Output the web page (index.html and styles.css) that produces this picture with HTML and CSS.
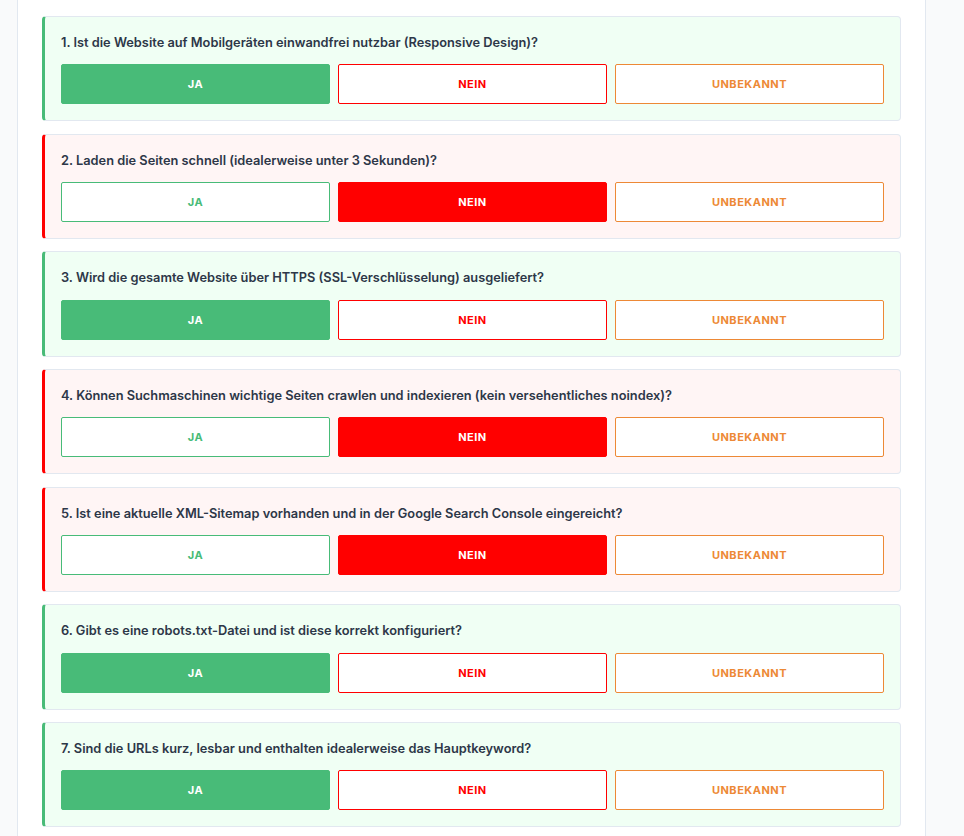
FILE: index.html
```html
<!DOCTYPE html>
<html lang="de">
<head>
<meta charset="utf-8">
<title>SEO Check</title>
<link rel="stylesheet" href="styles.css">
</head>
<body>
<div class="page">
  <div class="q q-yes">
    <div class="q-title">1. Ist die Website auf Mobilgeräten einwandfrei nutzbar (Responsive Design)?</div>
    <div class="opts">
      <button class="opt ja active">JA</button>
      <button class="opt nein">NEIN</button>
      <button class="opt unb">UNBEKANNT</button>
    </div>
  </div>
  <div class="q q-no">
    <div class="q-title">2. Laden die Seiten schnell (idealerweise unter 3 Sekunden)?</div>
    <div class="opts">
      <button class="opt ja">JA</button>
      <button class="opt nein active">NEIN</button>
      <button class="opt unb">UNBEKANNT</button>
    </div>
  </div>
  <div class="q q-yes">
    <div class="q-title">3. Wird die gesamte Website über HTTPS (SSL-Verschlüsselung) ausgeliefert?</div>
    <div class="opts">
      <button class="opt ja active">JA</button>
      <button class="opt nein">NEIN</button>
      <button class="opt unb">UNBEKANNT</button>
    </div>
  </div>
  <div class="q q-no">
    <div class="q-title">4. Können Suchmaschinen wichtige Seiten crawlen und indexieren (kein versehentliches noindex)?</div>
    <div class="opts">
      <button class="opt ja">JA</button>
      <button class="opt nein active">NEIN</button>
      <button class="opt unb">UNBEKANNT</button>
    </div>
  </div>
  <div class="q q-no">
    <div class="q-title">5. Ist eine aktuelle XML-Sitemap vorhanden und in der Google Search Console eingereicht?</div>
    <div class="opts">
      <button class="opt ja">JA</button>
      <button class="opt nein active">NEIN</button>
      <button class="opt unb">UNBEKANNT</button>
    </div>
  </div>
  <div class="q q-yes">
    <div class="q-title">6. Gibt es eine robots.txt-Datei und ist diese korrekt konfiguriert?</div>
    <div class="opts">
      <button class="opt ja active">JA</button>
      <button class="opt nein">NEIN</button>
      <button class="opt unb">UNBEKANNT</button>
    </div>
  </div>
  <div class="q q-yes">
    <div class="q-title">7. Sind die URLs kurz, lesbar und enthalten idealerweise das Hauptkeyword?</div>
    <div class="opts">
      <button class="opt ja active">JA</button>
      <button class="opt nein">NEIN</button>
      <button class="opt unb">UNBEKANNT</button>
    </div>
  </div>
</div>
</body>
</html>
```

FILE: styles.css
```css
html, body {
  margin: 0;
  padding: 0;
}
body {
  background: #f9fafb;
  font-family: Inter, "Liberation Sans", sans-serif;
  color: #2d3748;
}
.page {
  box-sizing: border-box;
  margin-left: 17px;
  width: 909px;
  min-height: 836px;
  background: #ffffff;
  border-left: 1px solid #e2e8f0;
  border-right: 1px solid #e2e8f0;
  padding: 16px 24px 0 24px;
}
.q {
  box-sizing: border-box;
  margin-bottom: 12.47px;
  border: 1px solid #e2e8f0;
  border-left-width: 3px;
  border-radius: 4px;
  padding: 16px;
}
.q-yes {
  background: #f0fff4;
  border-left-color: #48bb78;
}
.q-no {
  background: #fff5f5;
  border-left-color: #ff0000;
}
.q-title {
  font-size: 12.8px;
  font-weight: 600;
  line-height: 19.2px;
  margin-bottom: 12px;
  color: #2d3748;
}
.opts {
  display: grid;
  grid-template-columns: 1fr 1fr 1fr;
  gap: 8px;
}
.opt {
  box-sizing: border-box;
  height: 40px;
  background: #ffffff;
  border: 1px solid;
  border-radius: 2px;
  font-family: Inter, "Liberation Sans", sans-serif;
  font-size: 11px;
  font-weight: 700;
  letter-spacing: 0.5px;
  padding: 0;
}
.ja { border-color: #48bb78; color: #48bb78; }
.nein { border-color: #ff0000; color: #ff0000; }
.unb { border-color: #ed8936; color: #ed8936; }
.ja.active { background: #48bb78; color: #ffffff; }
.nein.active { background: #ff0000; color: #ffffff; }
```
